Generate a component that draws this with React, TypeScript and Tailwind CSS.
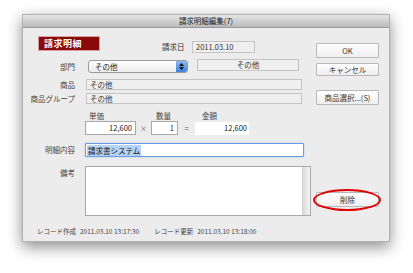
import React from "react";

const font = { fontFamily: '"Noto Sans CJK JP", "Noto Sans", sans-serif' };

function RoField({ className = "", children, center = false }: { className?: string; children?: React.ReactNode; center?: boolean }) {
  return (
    <div
      className={`border border-[#c4c4c4] bg-[#efefef] text-[7.5px] leading-none text-[#333] flex items-center px-[3px] ${center ? "justify-center" : ""} ${className}`}
    >
      {children}
    </div>
  );
}

function Btn({ children, className = "" }: { children: React.ReactNode; className?: string }) {
  return (
    <div
      className={`w-[63px] border border-[#b8b8b8] bg-gradient-to-b from-[#ffffff] to-[#eeeeee] rounded-[1px] flex items-center justify-center text-[7.5px] leading-none text-[#333] ${className}`}
    >
      {children}
    </div>
  );
}

export default function App() {
  return (
    <div className="w-[413px] h-[273px] bg-white overflow-hidden pt-[14px]" style={font}>
      <div className="ml-[22px] w-[368px] h-[228px] bg-[#ececec] flex flex-col shadow-[0_5px_14px_rgba(0,0,0,0.45)] border border-[#b0b0b0]">
        {/* title bar */}
        <div className="h-[13px] bg-gradient-to-b from-[#e6e6e6] to-[#bababa] border-b border-[#9a9a9a] flex items-center justify-center text-[7.5px] leading-none text-[#222]">
          請求明細編集(7)
        </div>
        <div className="flex flex-row flex-1">
          {/* left column */}
          <div className="w-[293px] flex flex-col">
            {/* header row */}
            <div className="mt-[8px] h-[15px] flex items-start">
              <div className="ml-[15px] w-[62px] h-[15px] bg-[#8a0a0a] border border-[#d8a0a0] text-white font-bold text-[9px] leading-none flex items-center pl-[5px] tracking-[0.5px]">
                請求明細
              </div>
              <div className="ml-[62px] w-[24px] h-[11px] mt-[5px] flex items-center text-[7.5px] leading-none text-[#333] whitespace-nowrap">
                請求日
              </div>
              <RoField className="ml-[6px] mt-[5px] w-[63px] h-[12px]">2011.03.10</RoField>
            </div>
            {/* dept row */}
            <div className="mt-[9px] h-[14px] flex items-start">
              <div className="w-[52px] h-[13px] flex items-center justify-end text-[7.5px] leading-none text-[#444]">部門</div>
              <div className="ml-[13px] w-[100px] h-[13px] rounded-[3px] border border-[#9a9a9a] bg-gradient-to-b from-[#ffffff] to-[#ececec] flex items-center overflow-hidden">
                <span className="flex-1 pl-[6px] text-[7.5px] leading-none text-[#222]">その他</span>
                <div className="w-[11px] h-full bg-gradient-to-b from-[#8cb8f0] to-[#3e82dc] flex flex-col items-center justify-center gap-[1px]">
                  <svg width="5" height="3" viewBox="0 0 5 3"><path d="M0 3 L2.5 0 L5 3 Z" fill="#111" /></svg>
                  <svg width="5" height="3" viewBox="0 0 5 3"><path d="M0 0 L2.5 3 L5 0 Z" fill="#111" /></svg>
                </div>
              </div>
              <RoField center className="ml-[9px] w-[102px] h-[12px] mt-[-1px]">その他</RoField>
            </div>
            {/* 商品 */}
            <div className="mt-[5px] h-[11px] flex items-center">
              <div className="w-[52px] flex justify-end text-[7.5px] leading-none text-[#444]">商品</div>
              <RoField className="ml-[11px] w-[216px] h-[11px]">その他</RoField>
            </div>
            {/* 商品グループ */}
            <div className="mt-[3px] h-[11px] flex items-center">
              <div className="w-[52px] flex justify-end text-[7.5px] leading-none text-[#444] whitespace-nowrap">商品グループ</div>
              <RoField className="ml-[11px] w-[216px] h-[11px]">その他</RoField>
            </div>
            {/* amount labels */}
            <div className="mt-[8px] h-[8px] flex items-center text-[7.5px] leading-none text-[#444]">
              <span className="ml-[66px] w-[20px]">単価</span>
              <span className="ml-[47px] w-[20px]">数量</span>
              <span className="ml-[26px] w-[20px]">金額</span>
            </div>
            {/* amount inputs */}
            <div className="mt-[1px] h-[14px] flex items-center text-[7.5px] leading-none text-[#222]">
              <div className="ml-[62px] w-[51px] h-[14px] bg-white border border-[#a8a8a8] flex items-center justify-end pr-[3px]">12,600</div>
              <span className="w-[15px] text-center text-[7px] text-[#555]">×</span>
              <div className="w-[27px] h-[14px] bg-white border border-[#a8a8a8] flex items-center justify-end pr-[3px]">1</div>
              <span className="w-[17px] text-center text-[#555]">=</span>
              <div className="w-[54px] h-[13px] bg-white flex items-center justify-end pr-[2px]">12,600</div>
            </div>
            {/* 明細内容 */}
            <div className="mt-[8px] h-[14px] flex items-center">
              <div className="w-[52px] flex justify-end text-[7.5px] leading-none text-[#444]">明細内容</div>
              <div className="ml-[10px] w-[219px] h-[14px] bg-white border-[1.5px] border-[#6a9ee0] rounded-[1px] shadow-[0_0_1.5px_#86b3ea] flex items-center pl-[1px]">
                <span className="bg-[#b5d3f7] text-[7.5px] leading-[11px] text-[#111] px-[1px]">請求書システム</span>
              </div>
            </div>
            {/* 備考 */}
            <div className="mt-[9px] h-[50px] flex items-start">
              <div className="w-[52px] flex justify-end text-[7.5px] leading-none text-[#444] mt-[3px]">備考</div>
              <div className="ml-[10px] w-[226px] h-[50px] bg-white border border-[#a8a8a8] flex justify-end">
                <div className="w-[8px] h-full bg-gradient-to-r from-[#dcdcdc] to-[#f4f4f4] border-l border-[#cfcfcf]" />
              </div>
            </div>
            {/* footer */}
            <div className="mt-[12px] flex items-center text-[6.5px] leading-none text-[#444] whitespace-nowrap">
              <span className="ml-[14px]">レコード作成</span>
              <span className="ml-[4px]">2011.03.10 13:17:30</span>
              <span className="ml-[15px]">レコード更新</span>
              <span className="ml-[4px]">2011.03.10 13:18:00</span>
            </div>
          </div>
          {/* right column */}
          <div className="w-[63px] flex flex-col">
            <Btn className="mt-[15px] h-[15px]">OK</Btn>
            <Btn className="mt-[5px] h-[13px]">キャンセル</Btn>
            <Btn className="mt-[14px] h-[15px]">商品選択...(S)</Btn>
            <div className="relative mt-[87px]">
              <Btn className="h-[15px]">削除</Btn>
              <div className="absolute left-[-3px] top-[-3px] w-[68px] h-[22px] rounded-[50%] border-2 border-[#e00000]" />
            </div>
          </div>
        </div>
      </div>
    </div>
  );
}
